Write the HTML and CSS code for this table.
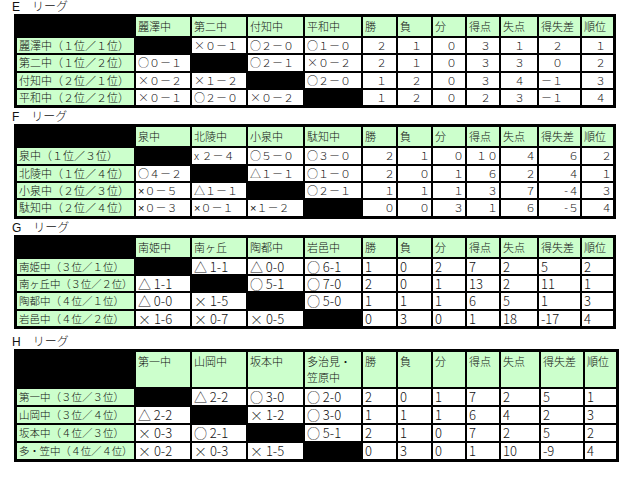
FILE: index.html
```html
<!DOCTYPE html>
<html lang="ja">
<head>
<meta charset="utf-8">
<title>リーグ戦績</title>
<link rel="stylesheet" href="styles.css">
</head>
<body>
<section class="league league-e">
  <div class="title">E　リーグ</div>
  <div class="grid">
    <div class="c k"></div><div class="c h">麗澤中</div><div class="c h">第二中</div><div class="c h">付知中</div><div class="c h">平和中</div><div class="c h">勝</div><div class="c h">負</div><div class="c h">分</div><div class="c h">得点</div><div class="c h">失点</div><div class="c h">得失差</div><div class="c h">順位</div>
    <div class="c g">麗澤中（１位／１位）</div><div class="c k"></div><div class="c"><span class="fw">×</span>０－１</div><div class="c">○２－０</div><div class="c">○１－０</div><div class="c">　２</div><div class="c">　１</div><div class="c">　０</div><div class="c">　３</div><div class="c">　１</div><div class="c">　２</div><div class="c">　１</div>
    <div class="c g">第二中（１位／２位）</div><div class="c">○０－１</div><div class="c k"></div><div class="c">○２－１</div><div class="c"><span class="fw">×</span>０－２</div><div class="c">　２</div><div class="c">　１</div><div class="c">　０</div><div class="c">　３</div><div class="c">　３</div><div class="c">　０</div><div class="c">　２</div>
    <div class="c g">付知中（２位／１位）</div><div class="c"><span class="fw">×</span>０－２</div><div class="c"><span class="fw">×</span>１－２</div><div class="c k"></div><div class="c">○２－０</div><div class="c">　１</div><div class="c">　２</div><div class="c">　０</div><div class="c">　３</div><div class="c">　４</div><div class="c">－１</div><div class="c">　３</div>
    <div class="c g">平和中（２位／２位）</div><div class="c"><span class="fw">×</span>０－１</div><div class="c">○２－０</div><div class="c"><span class="fw">×</span>０－２</div><div class="c k"></div><div class="c">　１</div><div class="c">　２</div><div class="c">　０</div><div class="c">　２</div><div class="c">　３</div><div class="c">－１</div><div class="c">　４</div>
  </div>
</section>

<section class="league league-f">
  <div class="title">F　リーグ</div>
  <div class="grid">
    <div class="c k"></div><div class="c h">泉中</div><div class="c h">北陵中</div><div class="c h">小泉中</div><div class="c h">駄知中</div><div class="c h">勝</div><div class="c h">負</div><div class="c h">分</div><div class="c h">得点</div><div class="c h">失点</div><div class="c h">得失差</div><div class="c h">順位</div>
    <div class="c g">泉中（１位／３位）</div><div class="c k"></div><div class="c">x ２－４</div><div class="c">○５－０</div><div class="c">○３－０</div><div class="c r">２</div><div class="c r">１</div><div class="c r">０</div><div class="c r">１０</div><div class="c r">４</div><div class="c r">６</div><div class="c r">２</div>
    <div class="c g">北陵中（１位／４位）</div><div class="c">○４－２</div><div class="c k"></div><div class="c">△１－１</div><div class="c">○１－０</div><div class="c r">２</div><div class="c r">０</div><div class="c r">１</div><div class="c r">６</div><div class="c r">２</div><div class="c r">４</div><div class="c r">１</div>
    <div class="c g">小泉中（２位／３位）</div><div class="c"><span class="hw">×</span>０－５</div><div class="c">△１－１</div><div class="c k"></div><div class="c">○２－１</div><div class="c r">１</div><div class="c r">１</div><div class="c r">１</div><div class="c r">３</div><div class="c r">７</div><div class="c r">-４</div><div class="c r">３</div>
    <div class="c g">駄知中（２位／４位）</div><div class="c"><span class="hw">×</span>０－３</div><div class="c"><span class="hw">×</span>０－１</div><div class="c"><span class="hw">×</span>１－２</div><div class="c k"></div><div class="c r">０</div><div class="c r">０</div><div class="c r">３</div><div class="c r">１</div><div class="c r">６</div><div class="c r">-５</div><div class="c r">４</div>
  </div>
</section>

<section class="league league-g">
  <div class="title">G　リーグ</div>
  <div class="grid">
    <div class="c k"></div><div class="c h">南姫中</div><div class="c h">南ヶ丘</div><div class="c h">陶都中</div><div class="c h">岩邑中</div><div class="c h">勝</div><div class="c h">負</div><div class="c h">分</div><div class="c h">得点</div><div class="c h">失点</div><div class="c h">得失差</div><div class="c h">順位</div>
    <div class="c g">南姫中（３位／１位）</div><div class="c k"></div><div class="c s">△ 1-1</div><div class="c s">△ 0-0</div><div class="c s">○ 6-1</div><div class="c s">1</div><div class="c s">0</div><div class="c s">2</div><div class="c s">7</div><div class="c s">2</div><div class="c s">5</div><div class="c s">2</div>
    <div class="c g tight">南ヶ丘中（３位／２位）</div><div class="c s">△ 1-1</div><div class="c k"></div><div class="c s">○ 5-1</div><div class="c s">○ 7-0</div><div class="c s">2</div><div class="c s">0</div><div class="c s">1</div><div class="c s">13</div><div class="c s">2</div><div class="c s">11</div><div class="c s">1</div>
    <div class="c g">陶都中（４位／１位）</div><div class="c s">△ 0-0</div><div class="c s"><span class="fw">×</span> 1-5</div><div class="c k"></div><div class="c s">○ 5-0</div><div class="c s">1</div><div class="c s">1</div><div class="c s">1</div><div class="c s">6</div><div class="c s">5</div><div class="c s">1</div><div class="c s">3</div>
    <div class="c g">岩邑中（４位／２位）</div><div class="c s"><span class="fw">×</span> 1-6</div><div class="c s"><span class="fw">×</span> 0-7</div><div class="c s"><span class="fw">×</span> 0-5</div><div class="c k"></div><div class="c s">0</div><div class="c s">3</div><div class="c s">0</div><div class="c s">1</div><div class="c s">18</div><div class="c s">-17</div><div class="c s">4</div>
  </div>
</section>

<section class="league league-h">
  <div class="title">H　リーグ</div>
  <div class="grid">
    <div class="c k"></div><div class="c h">第一中</div><div class="c h">山岡中</div><div class="c h">坂本中</div><div class="c h">多治見・<br>笠原中</div><div class="c h">勝</div><div class="c h">負</div><div class="c h">分</div><div class="c h">得点</div><div class="c h">失点</div><div class="c h">得失差</div><div class="c h">順位</div>
    <div class="c g">第一中（３位／３位）</div><div class="c k"></div><div class="c s">△ 2-2</div><div class="c s">○ 3-0</div><div class="c s">○ 2-0</div><div class="c s">2</div><div class="c s">0</div><div class="c s">1</div><div class="c s">7</div><div class="c s">2</div><div class="c s">5</div><div class="c s">1</div>
    <div class="c g">山岡中（３位／４位）</div><div class="c s">△ 2-2</div><div class="c k"></div><div class="c s"><span class="fw">×</span> 1-2</div><div class="c s">○ 3-0</div><div class="c s">1</div><div class="c s">1</div><div class="c s">1</div><div class="c s">6</div><div class="c s">4</div><div class="c s">2</div><div class="c s">3</div>
    <div class="c g">坂本中（４位／３位）</div><div class="c s"><span class="fw">×</span> 0-3</div><div class="c s">○ 2-1</div><div class="c k"></div><div class="c s">○ 5-1</div><div class="c s">2</div><div class="c s">1</div><div class="c s">0</div><div class="c s">7</div><div class="c s">2</div><div class="c s">5</div><div class="c s">2</div>
    <div class="c g tight">多・笠中（４位／４位）</div><div class="c s"><span class="fw">×</span> 0-2</div><div class="c s"><span class="fw">×</span> 0-3</div><div class="c s"><span class="fw">×</span> 1-5</div><div class="c k"></div><div class="c s">0</div><div class="c s">3</div><div class="c s">0</div><div class="c s">1</div><div class="c s">10</div><div class="c s">-9</div><div class="c s">4</div>
  </div>
</section>
</body>
</html>
```
FILE: styles.css
```css
html, body {
  margin: 0;
  background: #fff;
}
body {
  font-family: "Noto Sans CJK JP", sans-serif;
  font-size: 11px;
  font-weight: 300;
  color: #111;
}
.title {
  height: 14px;
  line-height: 14px;
  font-family: "Liberation Sans", "Noto Sans CJK JP", sans-serif;
  font-size: 12px;
  padding-left: 12px;
  white-space: pre;
}
.league-f { margin-top: 2px; }
.league-g { margin-top: 2px; }
.league-h { margin-top: 6px; }

.grid {
  display: grid;
  width: max-content;
  margin-left: 14px;
  border: 1px solid #000;
  padding: 2px;
  gap: 2px;
  background: #000;
  grid-template-columns: 117px 54px 54px 55px 56px 33px 33px 32px 32px 36px 41px 31px;
  grid-template-rows: 19px repeat(4, 15.33px);
}
.league-h .grid {
  grid-template-columns: 117px 54px 54px 55px 56px 33px 33px 32px 32px 38px 42px 31px;
  grid-template-rows: 35px repeat(4, 16px);
}
.c {
  background: #fff;
  padding: 0 1px 0 2px;
  line-height: 15px;
  white-space: nowrap;
}
.h {
  background: #ccffcc;
  line-height: 16px;
  padding-top: 1px;
  white-space: normal;
}
.g { background: #ccffcc; }
.k { background: #000; }
.r { text-align: right; padding-right: 1px; }
.s {
  font-size: 13px;
  line-height: 14px;
  padding-top: 1px;
}
.league-g .g, .league-h .g { font-size: 10.5px; }
.tight { letter-spacing: -0.2px; }
.fw { font-feature-settings: "fwid" 1; }
.hw { font-family: "Liberation Sans", sans-serif; }
```
